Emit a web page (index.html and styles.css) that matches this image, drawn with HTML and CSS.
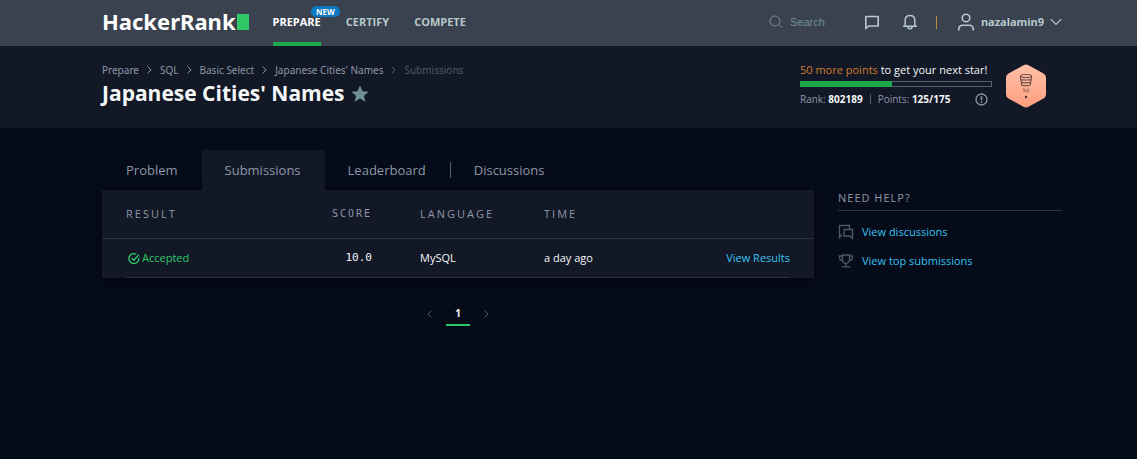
FILE: index.html
```html
<!DOCTYPE html>
<html lang="en">
<head>
<meta charset="utf-8">
<meta name="viewport" content="width=device-width, initial-scale=1">
<title>Japanese Cities' Names - Submissions</title>
<link rel="stylesheet" href="styles.css">
</head>
<body>
<header class="topbar wrap">
  <a class="logo" href="#">HackerRank<span class="logo-block"></span></a>
  <nav class="nav" aria-label="Main">
    <a class="nav-link active" href="#">PREPARE<span class="badge">NEW</span></a>
    <a class="nav-link" href="#">CERTIFY</a>
    <a class="nav-link" href="#">COMPETE</a>
  </nav>
  <div class="tools">
    <label class="search">
      <svg width="14" height="14" viewBox="0 0 14 14" fill="none" stroke="currentColor"><circle cx="6" cy="6" r="5"/><path d="M9.6 9.6L13 12.6"/></svg>
      <input type="text" placeholder="Search" aria-label="Search">
    </label>
    <button class="icon-btn chat" aria-label="Messages"><svg width="16" height="16" viewBox="0 0 16 16" fill="none" stroke="currentColor" stroke-width="1.6"><path d="M1.8 14.500V2.500h12.400v9.500H4.600z" stroke-linejoin="round"/></svg></button>
    <button class="icon-btn bell" aria-label="Notifications"><svg width="16" height="16" viewBox="0 0 16 16" fill="none" stroke="currentColor" stroke-width="1.5"><path d="M1 12.3h14M3.2 12V6.4C3.2 3.5 5.2 1.6 8 1.6s4.8 1.9 4.8 4.8V12M6 12.8c0 1.3.8 2 2 2s2-.7 2-2"/></svg></button>
    <span class="bar"></span>
    <button class="user"><svg width="18" height="18" viewBox="0 0 18 18" fill="none" stroke="currentColor" stroke-width="1.6"><circle cx="9" cy="5" r="3.8"/><path d="M1.8 17.5v-1.3c0-2.6 1.5-4 4-4h6.4c2.5 0 4 1.4 4 4v1.3"/></svg><span>nazalamin9</span><svg class="caret" width="12" height="8" viewBox="0 0 12 8" fill="none" stroke="currentColor" stroke-width="1.2"><path d="M.8 1.2L6 6.5l5.2-5.3"/></svg></button>
  </div>
</header>

<section class="hero wrap">
  <div class="hero-main">
    <nav class="crumbs" aria-label="Breadcrumb">
      <a href="#">Prepare</a><svg class="sep" viewBox="0 0 5 8"><path d="M.7.6L4 4 .7 7.4"/></svg>
      <a href="#">SQL</a><svg class="sep" viewBox="0 0 5 8"><path d="M.7.6L4 4 .7 7.4"/></svg>
      <a href="#">Basic Select</a><svg class="sep" viewBox="0 0 5 8"><path d="M.7.6L4 4 .7 7.4"/></svg>
      <a href="#">Japanese Cities' Names</a><svg class="sep dim" viewBox="0 0 5 8"><path d="M.7.6L4 4 .7 7.4"/></svg>
      <span class="dim">Submissions</span>
    </nav>
    <div class="title-row">
      <h1 class="title">Japanese Cities' Names</h1>
      <svg class="star" width="18" height="17" viewBox="0 0 18 17"><path d="M9 .6l2.5 5.6 6 .6-4.5 4 1.3 5.9L9 13.6l-5.3 3.1L5 10.8.5 6.8l6-.6z"/></svg>
    </div>
  </div>
  <div class="progress">
    <p class="next"><span class="more">50 more points</span> to get your next star!</p>
    <div class="meter"><div class="meter-fill" style="width:47.5%"></div></div>
    <div class="stats">
      <span>Rank: <b>802189</b></span><span class="stat-sep"></span><span>Points: <b>125/175</b></span>
      <svg class="info" width="13" height="13" viewBox="0 0 13 13" fill="none" stroke="currentColor" stroke-width="1.3"><circle cx="6.5" cy="6.5" r="5.5"/><path d="M6.5 3.2v4M6.5 8.5v1.4" stroke-width="1.6"/></svg>
    </div>
  </div>
  <svg class="hex" width="40" height="44" viewBox="0 0 40 44">
    <defs><linearGradient id="peach" x1="0" y1="0" x2="0" y2="1"><stop offset="0" stop-color="#ffc1a6"/><stop offset="1" stop-color="#ff9e80"/></linearGradient></defs>
    <path fill="url(#peach)" d="M17.5 1.2q2.5-1.4 5 0l15 8.4q2.5 1.4 2.5 4.1v16.6q0 2.7-2.5 4.1l-15 8.4q-2.5 1.4-5 0l-15-8.4Q0 33 0 30.300V13.700Q0 11 2.500 9.600z"/>
    <g fill="none" stroke="#6b4b48" stroke-width="1.100"><ellipse cx="20" cy="12" rx="5.500" ry="1.500"/><path d="M14.500 12v2.500c0 2 11 2 11 0V12M15 15.500v2c0 1.800 10 1.800 10 0v-2M15.500 18.500v2c0 1.600 9 1.600 9 0v-2"/></g>
    <text class="hex-text" x="20" y="28" text-anchor="middle">Sql</text>
    <circle cx="20" cy="33" r="1.200" fill="#4a3436"/>
  </svg>
</section>

<div class="content wrap">
  <main class="main">
    <nav class="tabs" aria-label="Challenge">
      <a class="tab" href="#">Problem</a>
      <a class="tab active" href="#">Submissions</a>
      <a class="tab" href="#">Leaderboard</a>
      <span class="tab-sep"></span>
      <a class="tab" href="#">Discussions</a>
    </nav>
    <table class="table">
      <thead>
        <tr><th class="c-result">RESULT</th><th class="c-score">SCORE</th><th class="c-lang">LANGUAGE</th><th class="c-time">TIME</th><th class="c-link"></th></tr>
      </thead>
      <tbody>
        <tr>
          <td class="c-result"><span class="accepted"><svg width="12" height="12" viewBox="0 0 12 12" fill="none" stroke="currentColor" stroke-width="1.300"><path d="M10.800 5.700A5 5 0 1 1 8.300 2.200M3.600 6.100L5.800 8.300 11 2.800"/></svg>Accepted</span></td>
          <td class="c-score">10.0</td>
          <td class="c-lang">MySQL</td>
          <td class="c-time">a day ago</td>
          <td class="c-link"><a class="link" href="#">View Results</a></td>
        </tr>
      </tbody>
    </table>
    <nav class="pager" aria-label="Pages">
      <button class="page-arrow" aria-label="Previous page"><svg width="5" height="8" viewBox="0 0 5 8"><path d="M4.300.6L1 4l3.300 3.400"/></svg></button>
      <a class="page" href="#">1</a>
      <button class="page-arrow" aria-label="Next page"><svg width="5" height="8" viewBox="0 0 5 8"><path d="M.7.6L4 4 .7 7.400"/></svg></button>
    </nav>
  </main>
  <aside class="side">
    <h2 class="side-title">NEED HELP?</h2>
    <a class="help" href="#"><svg width="16" height="16" viewBox="0 0 16 16" fill="none" stroke="currentColor" stroke-width="1.300"><path d="M4 10.500L1.500 13.500V1.500h10V5M6 5.500h8.500v9L12 12H6z"/></svg><span>View discussions</span></a>
    <a class="help" href="#"><svg width="16" height="16" viewBox="0 0 16 16" fill="none" stroke="currentColor" stroke-width="1.300"><path d="M4.500 2h7v4.500C11.500 9 10 10.300 8 10.300S4.500 9 4.500 6.500zM4.500 3H1.500v1.500C1.500 6.500 3 7.500 4.700 7.500M11.500 3h3v1.500c0 2-1.500 3-3.200 3M8 10.300v3M3.500 13.800h9"/></svg><span>View top submissions</span></a>
  </aside>
</div>
</body>
</html>
```
FILE: styles.css
```css
* { box-sizing: border-box; }
body {
  margin: 0;
  background: #050b19;
  color: #f3f7f7;
  font-family: "Open Sans", "Noto Sans", sans-serif;
  font-size: 11px;
  line-height: 16px;
}
a { color: inherit; text-decoration: none; }
button { padding: 0; border: 0; background: none; color: inherit; font: inherit; cursor: pointer; }
svg { display: block; flex: none; }
.wrap { padding-left: 102px; padding-right: 75px; }

.topbar { display: flex; height: 46px; background: #39424e; color: #b7c9cc; }
.logo {
  display: flex;
  align-items: center;
  gap: 1px;
  padding-bottom: 4px;
  color: #fff;
  font-family: "Noto Sans", "Open Sans", sans-serif;
  font-size: 22px;
  font-weight: 700;
  line-height: 40px;
}
.logo-block { width: 12px; height: 16px; margin-top: 2px; background: #2ec866; }
.nav { display: flex; gap: 25px; margin-left: 24px; }
.nav-link {
  position: relative;
  padding-top: 2px;
  font-weight: 700;
  line-height: 40px;
  border-bottom: 4px solid transparent;
}
.nav-link.active { color: #fff; border-color: #1ba94c; }
.badge {
  position: absolute;
  top: 6px;
  right: -19px;
  padding: 0 5px;
  border-radius: 6px;
  background: #0b78c2;
  color: #fff;
  font-size: 8px;
  line-height: 11px;
}
.tools { display: flex; align-items: center; margin-left: auto; height: 44px; }
.search { display: flex; align-items: center; gap: 7px; color: #738f93; }
.search input {
  width: 74px;
  padding: 0;
  border: 0;
  outline: 0;
  background: none;
  color: #b7c9cc;
  font: 11px/16px "Liberation Sans", Arial, sans-serif;
}
.search input::placeholder { color: #738f93; opacity: 1; }
.bell { margin-left: 22px; }
.bar { width: 1px; height: 13px; margin: 0 20px 0 18px; background: #b5903d; }
.user { display: flex; align-items: center; gap: 6px; font-family: "Noto Sans", "Open Sans", sans-serif; font-weight: 700; }

.hero {
  display: flex;
  align-items: flex-start;
  height: 82px;
  padding-top: 16px;
  background: #121826;
  border-bottom: 1px solid #0d1320;
}
.hero-main { flex: 1; }
.crumbs {
  display: flex;
  align-items: center;
  gap: 8px;
  color: #8d97a7;
  font-family: "Noto Sans", "Open Sans", sans-serif;
  font-size: 10px;
}
.sep { width: 5px; height: 8px; fill: none; stroke: currentColor; }
.dim { color: #4e5866; }
.title-row { display: flex; align-items: center; gap: 6px; }
.title { margin: 0; font-size: 21px; line-height: 30px; font-weight: 700; }
.star { fill: #738f93; }
.progress { width: 192px; }
.next { margin: 0; white-space: nowrap; }
.more { color: #d07d30; }
.meter { height: 6px; margin-top: 3px; border: 1px solid #5a616c; }
.meter-fill { height: 4px; background: #1ba94c; box-shadow: 0 0 0 1px #1ba94c; }
.stats { display: flex; align-items: center; margin-top: 4px; color: #8d97a7; font-size: 10px; }
.stats b { color: #f3f7f7; }
.stat-sep { width: 1px; height: 10px; margin: 0 7px; background: #4c6178; }
.info { margin: 0 4px 0 auto; }
.hex { margin: 2px 16px 0 14px; }
.hex-text { fill: #6b4b48; font-size: 5px; }

.content { display: grid; grid-template-columns: 1fr 224px; gap: 24px; padding-top: 22px; }
.tabs { display: flex; align-items: center; padding-left: 1px; color: #8d97a7; font-size: 13px; }
.tab { padding: 0 24px 0 23px; line-height: 40px; }
.tab.active { background: #121826; }
.tab-sep { width: 1px; height: 16px; background: #5a616c; }
.table {
  width: 100%;
  table-layout: fixed;
  border-collapse: collapse;
  background: #121826;
  box-shadow: 0 2px 10px rgba(0, 0, 0, .5);
}
.table th, .table td { padding: 0; text-align: left; }
.table th {
  height: 48px;
  border-bottom: 1px solid #2a303c;
  color: #8d97a7;
  font-weight: 400;
  letter-spacing: 2px;
}
.table td { height: 40px; }
.table tbody tr { background: linear-gradient(#2a303c, #2a303c) center bottom / calc(100% - 48px) 1px no-repeat; }
.table .c-result { width: 140px; padding-left: 24px; }
.table .c-score {
  width: 25%;
  padding-right: 48px;
  text-align: right;
  font-family: "DejaVu Sans Mono", monospace;
}
.table th.c-score { font-size: 10px; }
.c-lang { width: 124px; }
.c-time { width: 20%; }
.table .c-link { padding-right: 24px; text-align: right; }
.accepted { display: flex; align-items: center; gap: 2px; padding-left: 2px; color: #2ec866; }
.link, .help span { color: #39c2f0; }
.pager { display: flex; justify-content: center; align-items: center; gap: 14px; margin-top: 24px; color: #4e5866; }
.page-arrow svg { fill: none; stroke: currentColor; }
.page {
  width: 24px;
  border-bottom: 2px solid #2ec866;
  color: #f3f7f7;
  font-size: 10px;
  font-weight: 700;
  line-height: 22px;
  text-align: center;
}
.side { padding-top: 40px; }
.side-title {
  margin: 0 0 13px;
  padding-bottom: 4px;
  border-bottom: 1px solid #2f3541;
  color: #8d97a7;
  font-size: 11px;
  font-weight: 400;
  letter-spacing: 1px;
}
.help { display: flex; align-items: center; gap: 8px; margin-bottom: 13px; color: #4e5866; }
```
